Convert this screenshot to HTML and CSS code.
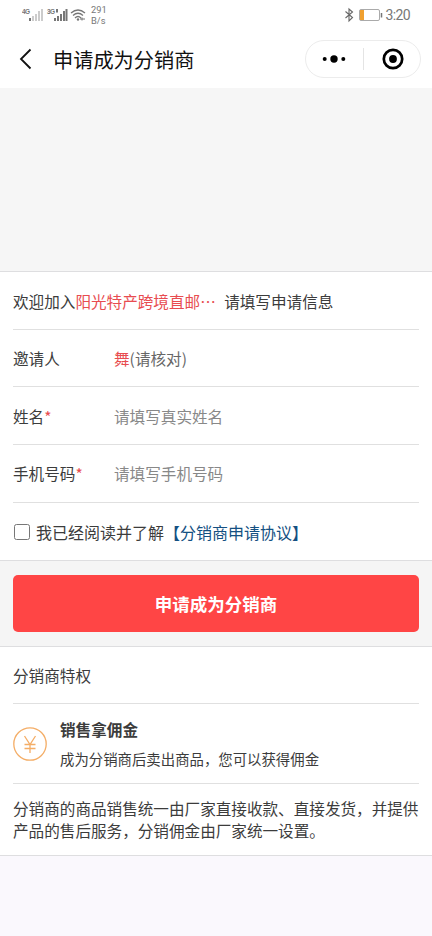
FILE: index.html
```html
<!DOCTYPE html>
<html lang="zh-CN">
<head>
<meta charset="utf-8">
<title>申请成为分销商</title>
<link rel="stylesheet" href="styles.css">
</head>
<body>
<header class="top">
  <div class="status">
    <svg class="signals" width="68" height="18" viewBox="0 0 68 18">
      <g class="net"><text x="0" y="8" textLength="8">4G</text><text x="25" y="8" textLength="8">3G</text></g>
      <g fill="#777"><rect x="7" y="12" width="2" height="3"/><rect x="34" y="3" width="2" height="3.500"/></g>
      <g fill="#ccc"><rect x="10" y="10" width="2" height="5"/><rect x="13" y="8" width="2" height="7"/><rect x="16" y="5" width="2" height="10"/><rect x="19" y="3" width="2" height="12"/></g>
      <g fill="#777"><rect x="32" y="12" width="2" height="3"/><rect x="35" y="10" width="2" height="5"/><rect x="38" y="8" width="2" height="7"/><rect x="41" y="5" width="2" height="10"/><rect x="43.500" y="3" width="2" height="12"/></g>
      <g fill="none" stroke="#777" stroke-width="1.300"><path d="M49 7Q56 1 63 7M51 9.500Q56 5 61 9.500M53 12Q56 9 59 12"/></g>
      <circle cx="56" cy="13.500" r="1.200" fill="#777"/><path d="M58 13h5M60 11.500v3" stroke="#777"/>
    </svg>
    <div class="speed">291<br>B/s</div>
    <div class="status-right">
      <svg width="40" height="18" viewBox="0 -1 40 18" fill="none">
        <path d="M1.500 4.500l7 6-3.500 3.500V2l3.500 3-7 6" stroke="#666" stroke-width="1.100"/>
        <rect x="15.500" y="2.500" width="20" height="11" rx="1.500" stroke="#aaa"/>
        <rect x="16" y="3" width="4" height="10" fill="#f0a030"/>
        <path d="M37.500 6v4.500" stroke="#777" stroke-width="1.500"/>
      </svg>
      <span class="clock">3:20</span>
    </div>
  </div>
  <div class="nav">
    <svg class="back" width="14" height="22" viewBox="0 0 14 22"><path d="M11.500 1.500L2 11l9.500 9.500" fill="none" stroke="#111" stroke-width="1.800"/></svg>
    <h1>申请成为分销商</h1>
    <div class="capsule">
      <svg width="114" height="36" viewBox="0 0 114 36">
        <circle cx="18.700" cy="18" r="2"/><circle cx="28" cy="18" r="3.700"/><circle cx="37.300" cy="18" r="2"/>
        <path d="M57.500 7v22" stroke="#e4e4e4"/>
        <circle cx="87" cy="18" r="9.200" fill="none" stroke="#000" stroke-width="2.700"/><circle cx="87" cy="18" r="3.900"/>
      </svg>
    </div>
  </div>
</header>
<div class="banner"></div>
<form class="panel">
  <div class="row intro">欢迎加入<span class="red">阳光特产跨境直邮<span class="dots">…</span></span><span class="tail">请填写申请信息</span></div>
  <div class="row"><span class="label">邀请人</span><span class="check-name"><span class="red">舞</span>(请核对)</span></div>
  <label class="row"><span class="label">姓名<i>*</i></span><input class="field" type="text" placeholder="请填写真实姓名"></label>
  <label class="row"><span class="label">手机号码<i>*</i></span><input class="field" type="tel" placeholder="请填写手机号码"></label>
  <label class="row agree"><input class="box" type="checkbox">我已经阅读并了解<span class="link">【分销商申请协议】</span></label>
</form>
<div class="action"><button class="submit" type="button">申请成为分销商</button></div>
<section class="panel privileges">
  <div class="row">分销商特权</div>
  <div class="perk">
    <svg width="34" height="34" viewBox="0 0 34 34" fill="none" stroke="#f4ad66" stroke-width="1.300"><circle cx="17" cy="17" r="16.200"/><path d="M11.500 9l5.500 8.500L22.500 9M17 17.500V26M11.500 17.500h11M11.500 21.500h11"/></svg>
    <div><h2>销售拿佣金</h2><p>成为分销商后卖出商品，您可以获得佣金</p></div>
  </div>
  <p class="note">分销商的商品销售统一由厂家直接收款、直接发货，并提供产品的售后服务，分销佣金由厂家统一设置。</p>
</section>
</body>
</html>
```

FILE: styles.css
```css
* { box-sizing: border-box; }
body {
  margin: 0;
  min-height: 936px;
  background: #faf8fd;
  color: #3c3c3c;
  font: 15.6px/22px "Noto Sans CJK SC", sans-serif;
}
h1, h2, p { margin: 0; }
.top { height: 88px; background: #fff; }
.status { display: flex; height: 32px; padding: 6px 22px 0; color: #777; }
.signals { flex: none; }
.net { font: bold 6.5px "Liberation Sans", sans-serif; fill: #777; }
.speed { margin: -2px 0 0 1px; font: 9.3px/11px Roboto, sans-serif; }
.status-right { display: flex; margin-left: auto; }
.clock { margin-left: 1px; font: 14px/19px Roboto, sans-serif; letter-spacing: -.6px; }
.nav { display: flex; align-items: center; height: 56px; padding: 0 11px 2px 19px; }
h1 { margin: 2px 0 0 20px; color: #111; font-size: 20.2px; font-weight: 400; line-height: 30px; }
.capsule { width: 116px; height: 38px; margin-left: auto; border: 1px solid #ececec; border-radius: 19px; }
.capsule svg { display: block; }
.banner { height: 183px; background: #f6f6f6; }
.panel { padding: 0 13px; border-top: 1px solid #dedee0; border-bottom: 1px solid #dedee0; background: #fff; }
.row { display: flex; align-items: center; height: 57.7px; border-bottom: 1px solid #e0e0e0; white-space: nowrap; }
.intro { padding-top: 1px; }
.red { color: #e84c50; }
.dots { display: inline-block; width: 16px; }
.tail { margin-left: 8px; }
.label { width: 101px; }
.label i { color: #e84c50; font-style: normal; }
.check-name { color: #666; }
.field { width: 300px; padding: 0; border: 0; outline: 0; background: none; font: inherit; }
.field::placeholder { color: #888; opacity: 1; }
.agree { border: 0; font-size: 16px; }
.box { appearance: none; width: 16px; height: 16px; margin: 0 6px 0 1px; border: 1px solid #777; border-radius: 2.5px; }
.link { color: #145082; }
.action { height: 85px; padding: 13.5px 13px 0; background: #f5f5f5; }
.submit { display: block; width: 100%; height: 57.5px; padding: 1px 0 0; border: 0; border-radius: 5px; background: #ff4545; color: #fff; font: bold 17.5px/26px "Noto Sans CJK SC", sans-serif; }
.privileges .row { height: 57px; }
.perk { display: flex; align-items: center; gap: 13px; height: 79.5px; border-bottom: 1px solid #e0e0e0; }
h2 { font-size: 15.6px; line-height: 26px; }
.perk p { margin-top: 4px; font-size: 14.4px; line-height: 25px; }
.note { height: 71px; padding-top: 13px; line-height: 22.5px; }
```
